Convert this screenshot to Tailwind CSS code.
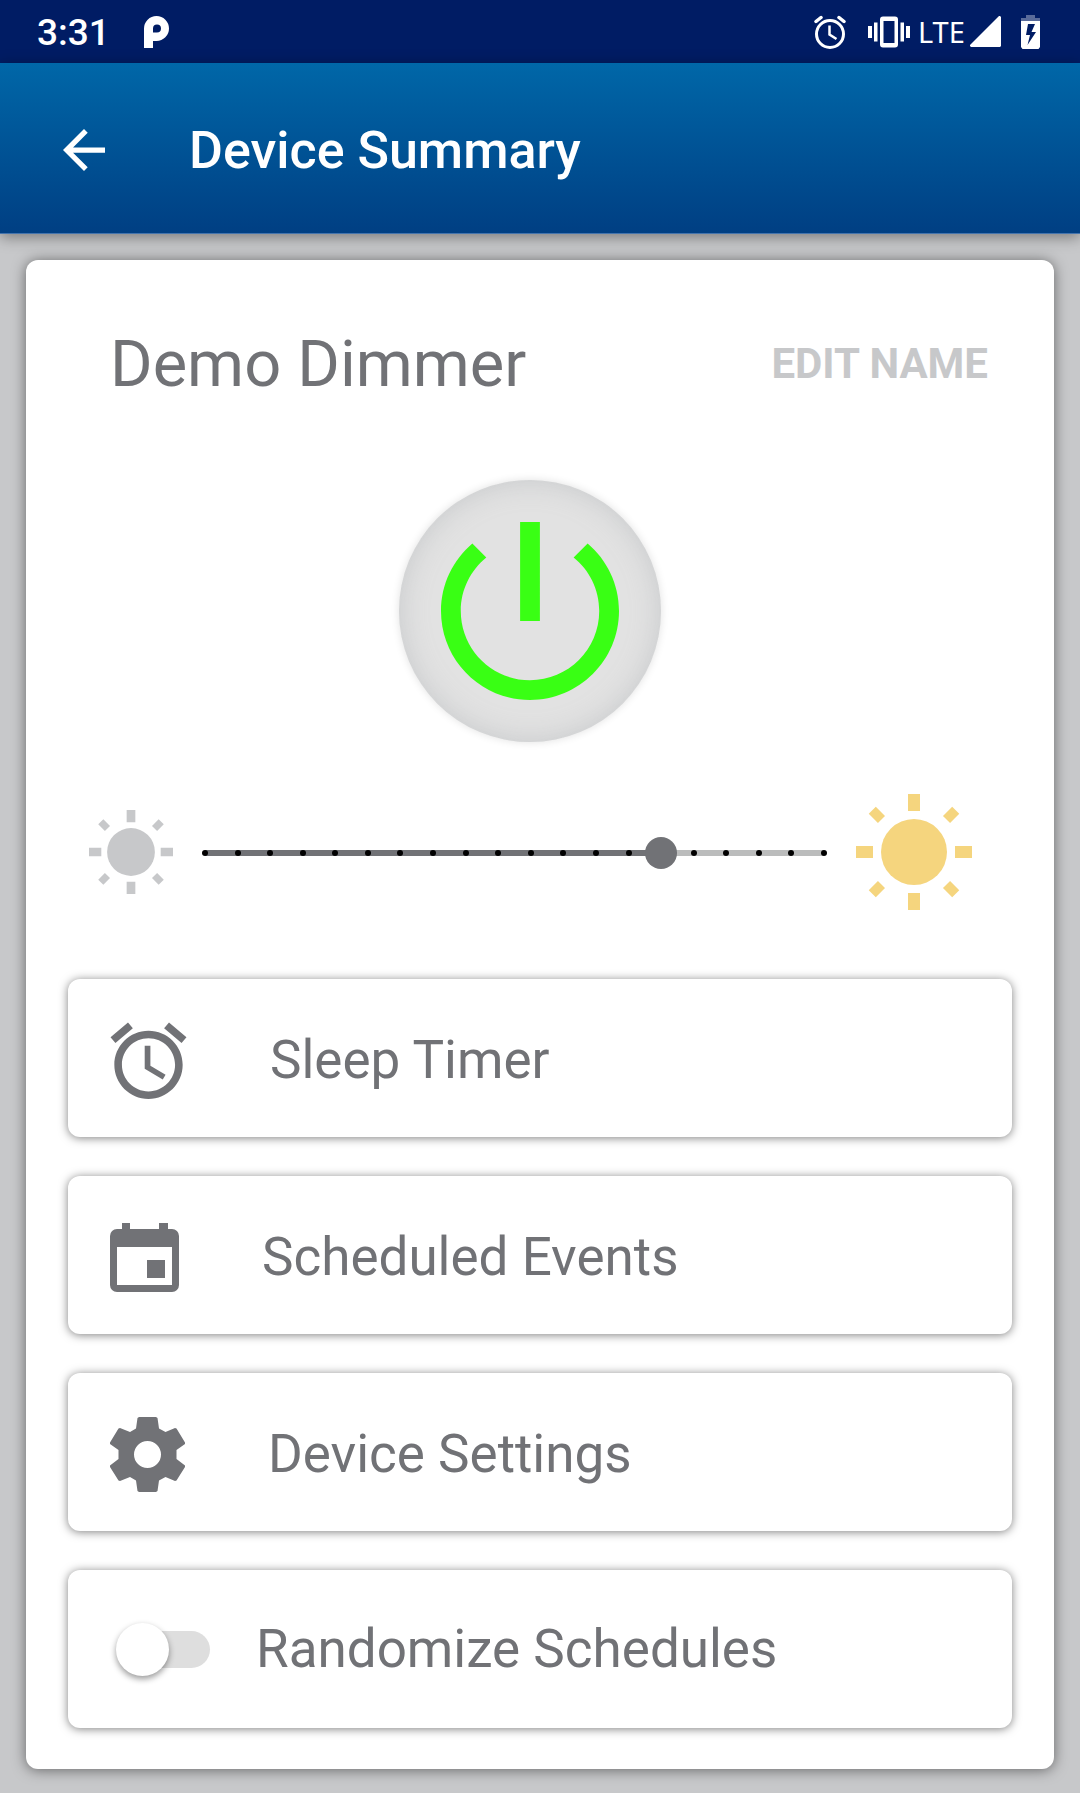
<!DOCTYPE html>
<html lang="en">
<head>
    <meta charset="UTF-8">
    <meta name="viewport" content="width=device-width, initial-scale=1.0">
    <title>Device Summary</title>
    <script src="https://cdn.jsdelivr.net/npm/@tailwindcss/browser@4"></script>
</head>
<body class="bg-[#c7c8ca] min-h-screen font-[Roboto,sans-serif] text-[#717276]">
    <!-- Status bar -->
    <div class="flex items-center h-[63px] pl-[37px] pr-10 bg-[#001c64] text-white">
        <span class="pt-0.5 text-[37px] leading-none font-medium">3:31</span>
        <svg class="ml-[34px] w-[25px] h-8" viewBox="0 0 25 32" fill="currentColor">
            <path fill-rule="evenodd" d="M0 32V12.500a12.500 12.500 0 1 1 12.500 12.500H9v7zM9 16.500h4a4 4 0 1 0-4-4z"/>
        </svg>
        <div class="ml-auto flex items-center">
            <svg class="w-8 h-[34px]" viewBox="0 0 32 34" fill="none" stroke="currentColor" stroke-linecap="round">
                <circle cx="16" cy="19" r="13.500" stroke-width="3"/>
                <path stroke-width="3.500" d="M2 6.500 7 2.500M30 6.500 25 2.500"/>
                <path stroke-width="2.500" stroke-linecap="butt" d="M15.500 10.500v9l7 4.500"/>
            </svg>
            <svg class="ml-[22px] w-[42px] h-8" viewBox="0 0 42 32" fill="currentColor">
                <path fill-rule="evenodd" d="M15 .500h12a3 3 0 0 1 3 3v25a3 3 0 0 1-3 3H15a3 3 0 0 1-3-3v-25a3 3 0 0 1 3-3zM15.500 5v22h11V5z"/>
                <path d="M0 10h4v12H0zM6 6.500h3.500v19H6zM32.500 6.500H36v19h-3.500zM38 10h4v12h-4z"/>
            </svg>
            <span class="ml-2 w-11 text-[29px] leading-none font-['Noto_Sans',sans-serif]">LTE</span>
            <svg class="ml-2 w-[31px] h-[31px]" viewBox="0 0 31 31" fill="currentColor">
                <path d="M29 0h1l1 1v29l-1 1H1l-1-1v-1z"/>
            </svg>
            <svg class="ml-5 w-[19px] h-[34px]" viewBox="0 0 19 34" fill="currentColor">
                <path opacity=".35" d="M5 0h9v3h5v3H0V3h5z"/>
                <path fill-rule="evenodd" d="M0 6h19v26l-1.500 2h-16L0 32zM7 9 5 20h4L6.500 30 15 17h-4.500L14 9z"/>
            </svg>
        </div>
    </div>

    <!-- App bar -->
    <header class="relative flex items-center h-[171px] pl-[63px] pt-1 bg-linear-to-b from-[#0067a8] to-[#003f83] border-b border-[#4474ad] shadow-[0_3px_14px_rgba(0,0,0,0.4)] text-white">
        <button type="button" aria-label="Back">
            <svg class="w-[42px] h-[42px]" viewBox="4 4 16 16" fill="currentColor">
                <path d="M20 11H7.830l5.590-5.590L12 4l-8 8 8 8 1.410-1.410L7.830 13H20v-2z"/>
            </svg>
        </button>
        <h1 class="ml-[84px] pt-0.5 text-[52px] leading-none font-medium">Device Summary</h1>
    </header>

    <main class="mx-[26px] mt-[26px] mb-6 pb-[41px] px-[42px] pt-16 rounded-xl bg-white shadow-[0_1px_14px_rgba(0,0,0,0.5)]">
        <div class="flex items-center justify-between pl-[42px] pr-6">
            <h2 class="text-[65px] leading-[80px]">Demo Dimmer</h2>
            <button type="button" class="text-[42px] leading-none font-bold text-[#c7c8ca]">EDIT NAME</button>
        </div>

        <button type="button" aria-label="Power" class="flex items-center justify-center mt-[76px] ml-[331px] w-[262px] h-[262px] rounded-full bg-[#e2e2e2] shadow-[0_0_8px_rgba(0,0,0,0.12),inset_0_0_28px_rgba(150,155,160,0.35)] text-[#39ff14]">
            <svg class="w-[178px] h-[178px]" viewBox="3 3 18 18" fill="currentColor">
                <path d="M13 3h-2v10h2V3zm4.830 2.170l-1.420 1.420C17.990 7.860 19 9.810 19 12c0 3.870-3.130 7-7 7s-7-3.130-7-7c0-2.190 1.010-4.140 2.580-5.420L6.170 5.170C4.230 6.820 3 9.260 3 12c0 4.970 4.030 9 9 9s9-4.030 9-9c0-2.740-1.230-5.180-3.170-6.830z"/>
            </svg>
        </button>

        <!-- Dimmer level -->
        <div class="flex items-center mt-[52px] pl-[21px] pr-10">
            <svg class="shrink-0 w-[84px] h-[84px] text-[#c7c8ca]" viewBox="-58 -58 116 116" fill="currentColor">
                <circle r="33"/>
                <path d="M-6-58H6v17H-6zM-6 41H6v17H-6zM-58-6h17V6h-17zM41-6h17V6H41z"/>
                <path transform="rotate(45)" d="M-5-59H5v13H-5zM-5 46H5v13H-5zM-59-5h13V5h-13zM46-5h13V5H46z"/>
            </svg>
            <div class="relative flex-1 mx-4 h-8">
                <div class="absolute inset-x-4 top-[14px] h-[6px] bg-[#bbbcbc]">
                    <div class="h-full bg-[#717276]" style="width: 73.7%"></div>
                </div>
                <div id="ticks" class="absolute inset-x-[13px] top-[14px] flex justify-between"></div>
                <input id="level" type="range" min="0" max="19" value="14" aria-label="Brightness"
                       class="absolute inset-0 w-full h-[34px] appearance-none bg-transparent [&::-webkit-slider-thumb]:appearance-none [&::-webkit-slider-thumb]:w-8 [&::-webkit-slider-thumb]:h-8 [&::-webkit-slider-thumb]:rounded-full [&::-webkit-slider-thumb]:bg-[#717276]">
            </div>
            <svg class="shrink-0 w-[116px] h-[116px] text-[#f5d57e]" viewBox="-58 -58 116 116" fill="currentColor">
                <circle r="33"/>
                <path d="M-6-58H6v17H-6zM-6 41H6v17H-6zM-58-6h17V6h-17zM41-6h17V6H41z"/>
                <path transform="rotate(45)" d="M-5-59H5v13H-5zM-5 46H5v13H-5zM-59-5h13V5h-13zM46-5h13V5H46z"/>
            </svg>
        </div>

        <div class="flex flex-col gap-[39px] mt-[69px]">
            <button type="button" class="flex items-center gap-[83px] h-[158px] pl-[42px] pt-1 rounded-xl bg-white shadow-[0_1px_10px_rgba(0,0,0,0.5)] text-[53px] leading-none">
                <svg class="w-[77px] h-[77px]" viewBox="2 1.720 20 20.280" fill="currentColor">
                    <path d="M22 5.720l-4.600-3.860-1.290 1.530 4.600 3.860L22 5.720zM7.880 3.390L6.600 1.860 2 5.710l1.290 1.530 4.590-3.850zM12.500 8H11v6l4.750 2.850.75-1.230-4-2.370V8zM12 4c-4.970 0-9 4.030-9 9s4.020 9 9 9c4.970 0 9-4.030 9-9s-4.030-9-9-9zm0 16c-3.870 0-7-3.130-7-7s3.130-7 7-7 7 3.130 7 7-3.130 7-7 7z"/>
                </svg>
                Sleep Timer
            </button>
            <button type="button" class="flex items-center gap-[83px] h-[158px] pl-[42px] pt-1 rounded-xl bg-white shadow-[0_1px_10px_rgba(0,0,0,0.5)] text-[53px] leading-none">
                <svg class="w-[69px] h-[69px]" viewBox="0 0 69 69" fill="currentColor">
                    <path fill-rule="evenodd" d="M12 0h8v6h29V0h9v6h4a7 7 0 0 1 7 7v49a7 7 0 0 1-7 7H7a7 7 0 0 1-7-7V13a7 7 0 0 1 7-7h5zM7 24v38h55V24z"/>
                    <path d="M37 37h18v18H37z"/>
                </svg>
                Scheduled Events
            </button>
            <button type="button" class="flex items-center gap-[83px] h-[158px] pl-[42px] pt-1 rounded-xl bg-white shadow-[0_1px_10px_rgba(0,0,0,0.5)] text-[53px] leading-none">
                <svg class="w-[75px] h-[75px]" viewBox="0 0 75 75" fill="currentColor">
                    <path fill-rule="evenodd" d="M29 0h17l1.500 1 1.500 10.500 6.500 3.500 9.500-4 1.500.500L75 25.500v1.500l-8.500 6v9l8.500 6.500v1.500l-8.500 13.500-1.500.500-9.500-4-6.500 3.500L47.500 74l-1.500 1H29l-1.500-1L26 63.500 20 60l-10 4-1.500-.500L0 50v-1.500L8.500 42v-9L0 27v-1.500L8.500 11.500 10 11l10 4 6-3.500L27.500 1zM37.500 24a13.500 13.500 0 1 0 0 27 13.500 13.500 0 0 0 0-27z"/>
                </svg>
                Device Settings
            </button>
            <label for="randomize" class="flex items-center gap-[46px] h-[158px] pl-14 rounded-xl bg-white shadow-[0_1px_10px_rgba(0,0,0,0.5)] text-[53px] leading-none">
                <input id="randomize" type="checkbox" role="switch" class="relative appearance-none w-[86px] h-[37px] rounded-full bg-[#dedede] before:absolute before:-left-2 before:-top-2 before:w-[53px] before:h-[53px] before:rounded-full before:bg-white before:shadow-[0_3px_6px_rgba(0,0,0,0.4)] checked:before:left-10">
                Randomize Schedules
            </label>
        </div>
    </main>

    <script>
        // one dot per dimmer step
        const ticks = document.getElementById('ticks');
        const level = document.getElementById('level');
        for (let i = 0; i <= Number(level.max); i++) {
            const dot = document.createElement('span');
            dot.className = 'w-[6px] h-[6px] rounded-full bg-black';
            ticks.appendChild(dot);
        }
    </script>
</body>
</html>
